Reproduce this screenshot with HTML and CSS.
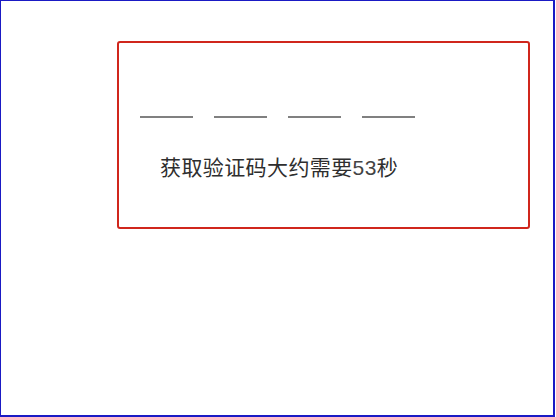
FILE: index.html
```html
<!DOCTYPE html>
<html lang="zh-CN">
<head>
<meta charset="utf-8">
<title>验证码</title>
<link rel="stylesheet" href="styles.css">
</head>
<body>
<div class="frame">
  <div class="card">
    <div class="slots">
      <span class="slot"></span>
      <span class="slot"></span>
      <span class="slot"></span>
      <span class="slot"></span>
    </div>
    <p class="hint">获取验证码大约需要<span class="num">53</span>秒</p>
  </div>
</div>
</body>
</html>
```

FILE: styles.css
```css
html, body {
  margin: 0;
  padding: 0;
  background: #ffffff;
}
body {
  font-family: "Noto Sans CJK SC", "Noto Sans", sans-serif;
}
.frame {
  box-sizing: border-box;
  width: 555px;
  height: 417px;
  border: 1px solid #1a1ac4;
  border-right-width: 2px;
  border-bottom-width: 2px;
  padding: 40px 0 0 116px;
}
.card {
  box-sizing: border-box;
  width: 413px;
  height: 188px;
  border: 2px solid #d0261c;
  border-radius: 3px;
  padding: 73px 0 0 21px;
}
.slots {
  display: flex;
  gap: 21px;
}
.slot {
  display: block;
  width: 53px;
  height: 2px;
  background: #808080;
}
.hint {
  margin: 36px 0 0 20px;
  font-size: 21px;
  line-height: 24px;
  letter-spacing: 0.4px;
  color: #2e2e2e;
  font-weight: 400;
}
.num {
  font-family: "Liberation Sans", sans-serif;
  font-weight: 400;
  color: #444;
}
```
